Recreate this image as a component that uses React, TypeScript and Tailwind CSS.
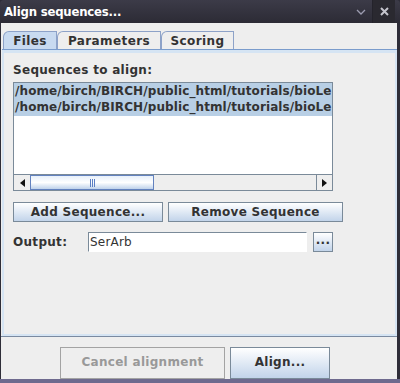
import React from "react";

const FONT = { fontFamily: '"DejaVu Sans", "Liberation Sans", sans-serif' };

function MetalButton({
  label,
  className = "",
  disabled = false,
}: {
  label: string;
  className?: string;
  disabled?: boolean;
}) {
  return (
    <button
      type="button"
      disabled={disabled}
      className={
        "flex items-center justify-center border text-[12px] font-bold tracking-[0.3px] " +
        (disabled
          ? "border-[#a3a3a3] bg-[#eeeeee] text-[#999999] "
          : "border-[#7a8a99] bg-gradient-to-b from-white to-[#c2d4ea] text-[#333333] ") +
        className
      }
    >
      {label}
    </button>
  );
}

function Tab({ label, active, className = "" }: { label: string; active?: boolean; className?: string }) {
  return (
    <div
      className={
        "relative flex h-[18px] items-center justify-center rounded-tl-[6px] border border-b-0 border-[#8da2c8] text-[12px] font-bold tracking-[0.4px] text-[#333333] " +
        (active ? "bg-[#c8daf0] " : "bg-[#eeeeee] ") +
        className
      }
    >
      {label}
    </div>
  );
}

export default function App() {
  return (
    <div className="flex h-[383px] w-[400px] flex-col bg-[#2e2d38]" style={FONT}>
      {/* Title bar */}
      <div className="flex h-[25px] items-center rounded-t-[4px] bg-gradient-to-b from-[#3c3b48] to-[#2c2b35] pl-[4px] pr-[5px]">
        <span
          className="text-[13px] font-bold tracking-[-0.2px] text-white"
          style={{ fontFamily: '"DejaVu Sans Condensed", "DejaVu Sans", sans-serif', fontStretch: "condensed" }}
        >
          Align sequences...
        </span>
        <div className="ml-auto flex h-full items-center">
          <div className="flex h-full w-[22px] items-center justify-center">
            <svg width="10" height="6" viewBox="0 0 10 6" aria-hidden="true">
              <path d="M1 1l4 4 4-4" fill="none" stroke="#9c9cb0" strokeWidth="1.3" />
            </svg>
          </div>
          <div className="flex h-full w-[23px] items-center justify-center border-l border-[#24232b] bg-[#2a2930]">
            <svg width="9" height="9" viewBox="0 0 9 9" aria-hidden="true">
              <path d="M1 1l7 7M8 1l-7 7" fill="none" stroke="#c4c4cc" strokeWidth="2" />
            </svg>
          </div>
        </div>
      </div>

      {/* Body */}
      <div className="ml-[1px] mr-[3px] flex flex-1 flex-col bg-[#eeeeee]">
        {/* Tabs */}
        <div className="flex pl-[2px] pt-[8px]">
          <Tab label="Files" active className="w-[54px]" />
          <Tab label="Parameters" className="w-[104px]" />
          <Tab label="Scoring" className="w-[73px]" />
        </div>

        {/* Tab panel */}
        <div className="ml-[1px] flex h-[287px] flex-col border-t border-[#7a9ccc] bg-[#eeeeee]">
          <div className="flex flex-1 flex-col border-2 border-t-[3px] border-[#d5e4f3] px-[9px]">
            <div className="mt-[10px] text-[12px] font-bold leading-[14px] tracking-[0.3px] text-[#333333]">
              Sequences to align:
            </div>

            {/* List */}
            <div className="mt-[5px] flex h-[109px] w-[320px] flex-col border border-[#7a8a99] bg-white">
              <div className="flex-1 overflow-hidden">
                <div className="h-[16px] whitespace-nowrap bg-[#b8cfe5] pl-[1px] text-[12px] font-bold leading-[16px] tracking-[0.1px] text-[#333333]">
                  /home/birch/BIRCH/public_html/tutorials/bioLe
                </div>
                <div className="h-[17px] whitespace-nowrap bg-[#b8cfe5] pl-[1px] text-[12px] font-bold leading-[16px] tracking-[0.1px] text-[#333333]">
                  /home/birch/BIRCH/public_html/tutorials/bioLe
                </div>
              </div>
              {/* Horizontal scrollbar */}
              <div className="flex h-[16px] border-t border-[#7a8a99] bg-[#eeeeee]">
                <div className="flex w-[16px] items-center justify-center">
                  <svg width="5" height="8" viewBox="0 0 5 8" aria-hidden="true">
                    <path d="M5 0L0 4l5 4z" fill="#111" />
                  </svg>
                </div>
                <div className="flex w-[124px] items-center justify-center border border-[#6382bf] bg-gradient-to-b from-[#e8f0fa] via-white to-[#bfd2ea]">
                  <svg width="5" height="8" viewBox="0 0 5 8" aria-hidden="true">
                    <path d="M0.5 0v8M2.5 0v8M4.5 0v8" stroke="#5b7fc4" strokeWidth="1" />
                  </svg>
                </div>
                <div className="flex-1" />
                <div className="flex w-[16px] items-center justify-center border-l border-[#7a8a99]">
                  <svg width="5" height="8" viewBox="0 0 5 8" aria-hidden="true">
                    <path d="M0 0l5 4-5 4z" fill="#111" />
                  </svg>
                </div>
              </div>
            </div>

            {/* Add / Remove */}
            <div className="mt-[11px] flex gap-[5px]">
              <MetalButton label="Add Sequence..." className="h-[20px] w-[150px]" />
              <MetalButton label="Remove Sequence" className="h-[20px] w-[175px]" />
            </div>

            {/* Output */}
            <div className="mt-[10px] flex items-center">
              <span className="w-[75px] text-[12px] font-bold tracking-[0.3px] text-[#333333]">Output:</span>
              <div className="flex h-[20px] w-[219px] items-center border border-[#7a8a99] border-b-white border-r-white bg-white pl-[1px] text-[12px] tracking-[0.2px] text-[#333333]">
                SerArb
              </div>
              <MetalButton label="..." className="ml-[6px] h-[20px] w-[20px] pb-[4px]" />
            </div>
          </div>
        </div>

        {/* Separator */}
        <div className="h-[1px] bg-[#7a8aa0]" />

        {/* Bottom buttons */}
        <div className="flex flex-1 items-start gap-[5px] overflow-hidden pl-[59px] pt-[10px]">
          <MetalButton label="Cancel alignment" disabled className="h-[32px] w-[165px] pb-[3px]" />
          <MetalButton label="Align..." className="h-[32px] w-[100px] pb-[3px]" />
        </div>
      </div>
      <div className="h-[4px] bg-[#6e6a8e]" />
    </div>
  );
}
